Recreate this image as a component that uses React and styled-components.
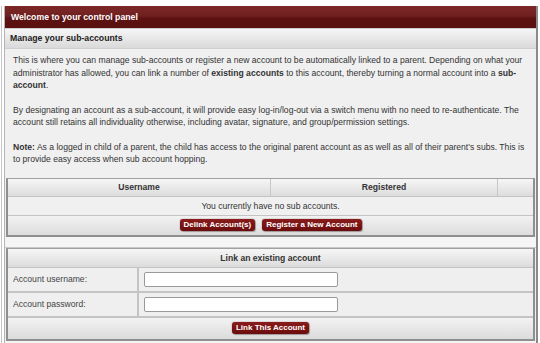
import React from 'react';
import styled, { createGlobalStyle } from 'styled-components';

const GlobalStyle = createGlobalStyle`
  html, body {
    margin: 0;
    padding: 0;
    background: #fff;
  }
  body {
    font-family: "Liberation Sans", Arial, sans-serif;
    font-size: 8.6px;
    color: #333;
  }
`;

const App = () => {
  return (
    <Page>
      <GlobalStyle />
      <Frame>
        <Panel>
          <TitleBar>Welcome to your control panel</TitleBar>
          <SubBar>Manage your sub-accounts</SubBar>
          <Body>
            <Para>
              This is where you can manage sub-accounts or register a new account to be automatically
              linked to a parent. Depending on what your administrator has allowed, you can link a number
              of <b>existing accounts</b> to this account, thereby turning a normal account into a{' '}
              <b>sub-account</b>.
            </Para>
            <Para>
              By designating an account as a sub-account, it will provide easy log-in/log-out via a switch
              menu with no need to re-authenticate. The account still retains all individuality otherwise,
              including avatar, signature, and group/permission settings.
            </Para>
            <Para>
              <b>Note:</b> As a logged in child of a parent, the child has access to the original parent
              account as as well as all of their parent's subs. This is to provide easy access when sub
              account hopping.
            </Para>
          </Body>
          <Table>
            <HeadRow cols="263px 227px 1fr">
              <HeadCell>Username</HeadCell>
              <HeadCell>Registered</HeadCell>
              <HeadCell last />
            </HeadRow>
            <Row>
              <Cell center>You currently have no sub accounts.</Cell>
            </Row>
            <FootRow>
              <Button>Delink Account(s)</Button>
              <Button>Register a New Account</Button>
            </FootRow>
          </Table>
          <Gap />
          <Table>
            <HeadRow cols="1fr">
              <HeadCell last tall>Link an existing account</HeadCell>
            </HeadRow>
            <FieldRow>
              <Label>Account username:</Label>
              <FieldCell>
                <Input type="text" />
              </FieldCell>
            </FieldRow>
            <FieldRow>
              <Label>Account password:</Label>
              <FieldCell>
                <Input type="password" />
              </FieldCell>
            </FieldRow>
            <FootRow tall>
              <Button>Link This Account</Button>
            </FootRow>
          </Table>
          <Bottom />
        </Panel>
      </Frame>
    </Page>
  );
};

export default App;

const Page = styled.div`
  height: 343px;
  padding: 6px 0 0 1px;
  box-sizing: border-box;
  overflow: hidden;
`;

const Frame = styled.div`
  border-left: 1px solid #c4c4c4;
  padding-left: 2px;
  height: 100%;
`;

const Panel = styled.div`
  width: 531px;
  border-left: 1px solid #b4b4b4;
  border-right: 2px solid #8a8a8a;
  background: #f0f0f0;
  height: 100%;
`;

const TitleBar = styled.div`
  height: 22px;
  line-height: 22px;
  padding-left: 6px;
  background: linear-gradient(#7d2828 0%, #702020 45%, #5e1212 55%, #5a1010 100%);
  color: #fff;
  font-weight: bold;
  font-size: 8.7px;
`;

const SubBar = styled.div`
  height: 19px;
  line-height: 19px;
  padding-left: 5px;
  background: linear-gradient(#f6f6f6, #d9d9d9);
  border-top: 1px solid #cfcfcf;
  color: #222;
  font-weight: bold;
  font-size: 8.7px;
`;

const Body = styled.div`
  padding: 5px 8px 12px 8px;
  background: #f0f0f0;
  border-top: 1px solid #d0d0d0;
`;

const Para = styled.p`
  margin: 0 0 12px;
  line-height: 12.5px;
  color: #333;
  &:last-child {
    margin-bottom: 0;
  }
`;

const Table = styled.div`
  margin: 0 1px;
  border: 2px solid #8f8f8f;
  border-top: 1px solid #a0a0a0;
  background: #efefef;
`;

const HeadRow = styled.div`
  display: grid;
  grid-template-columns: ${(p) => p.cols};
  background: linear-gradient(#f6f6f6, #dcdcdc);
  border-bottom: 1px solid #c4c4c4;
`;

const HeadCell = styled.div`
  height: ${(p) => (p.tall ? '18px' : '17px')};
  line-height: ${(p) => (p.tall ? '18px' : '17px')};
  text-align: center;
  font-weight: bold;
  color: #333;
  border-right: ${(p) => (p.last ? 'none' : '1px solid #c8c8c8')};
`;

const Row = styled.div`
  border-bottom: 1px solid #c4c4c4;
  background: #f0f0f0;
`;

const Cell = styled.div`
  height: 18px;
  line-height: 18px;
  text-align: ${(p) => (p.center ? 'center' : 'left')};
  color: #333;
`;

const FootRow = styled.div`
  height: ${(p) => (p.tall ? '21px' : '19px')};
  display: flex;
  justify-content: center;
  align-items: center;
  gap: 7px;
  background: linear-gradient(#f2f2f2, #dcdcdc);
`;

const Button = styled.span`
  display: inline-block;
  height: 12px;
  line-height: 12px;
  padding: 0 4px;
  background: linear-gradient(#8a1c1c, #6a0c0c);
  border-radius: 3px;
  box-shadow: 0 0 1px #400, 1px 1px 1px rgba(0, 0, 0, 0.25);
  color: #fff;
  font-weight: bold;
  font-size: 8px;
  white-space: nowrap;
`;

const Gap = styled.div`
  height: 10px;
  background: #f5f5f5;
  border-bottom: 1px solid #c8c8c8;
`;

const FieldRow = styled.div`
  display: grid;
  grid-template-columns: 131px 1fr;
  height: 23px;
  border-bottom: 2px solid #c4c4c4;
  background: #efefef;
`;

const Label = styled.div`
  line-height: 23px;
  padding-left: 5px;
  color: #444;
  border-right: 2px solid #c4c4c4;
`;

const FieldCell = styled.div`
  display: flex;
  align-items: center;
  padding-left: 5px;
`;

const Input = styled.input`
  width: 194px;
  height: 15px;
  box-sizing: border-box;
  border: 1px solid #9a9a9a;
  border-radius: 2px;
  background: #fff;
  padding: 0 3px;
  font-family: "Liberation Sans", Arial, sans-serif;
  font-size: 8.6px;
`;

const Bottom = styled.div`
  height: 8px;
  background: #f4f4f4;
`;
